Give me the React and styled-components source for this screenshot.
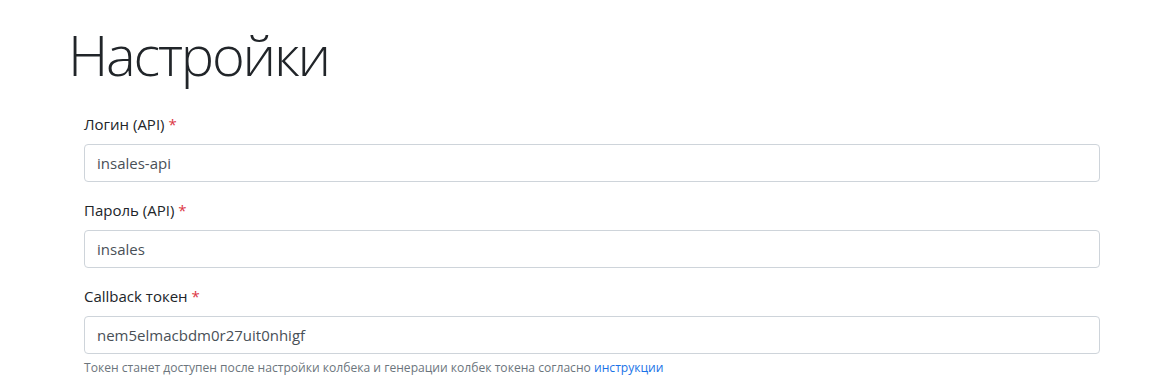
import React from "react";
import styled, { createGlobalStyle } from "styled-components";

const Global = createGlobalStyle`
  body {
    margin: 0;
    background: #fff;
    font-family: "Open Sans", "Noto Sans", sans-serif;
    color: #212529;
  }
`;

const Page = styled.div`
  padding: 21px 55px 0 68px;
`;

const Title = styled.h1`
  margin: 0 0 24px;
  font-size: 56px;
  font-weight: 300;
  line-height: 1.2;
  letter-spacing: -2.2px;
  color: #212529;
`;

const Form = styled.form`
  padding: 0 0 0 16px;
`;

const Group = styled.div`
  margin-bottom: 16px;
`;

const Label = styled.label`
  display: block;
  font-size: 15px;
  line-height: 24px;
  margin-bottom: 8px;
  color: #212529;
`;

const Req = styled.span`
  color: #dc3545;
`;

const Input = styled.input`
  display: block;
  box-sizing: border-box;
  width: 100%;
  height: 38px;
  padding: 6px 12px;
  font-family: inherit;
  font-size: 15px;
  color: #495057;
  background: #fff;
  border: 1px solid #ced4da;
  border-radius: 4px;
  outline: none;
`;

const Help = styled.small`
  display: block;
  margin-top: 5px;
  font-size: 12.1px;
  color: #6c757d;
`;

const Link = styled.a`
  color: #1a73e8;
  text-decoration: none;
`;

const fields = [
  { label: "Логин (API)", value: "insales-api" },
  { label: "Пароль (API)", value: "insales" },
  { label: "Callback токен", value: "nem5elmacbdm0r27uit0nhigf", help: true },
];

export default function App() {
  return (
    <Page>
      <Global />
      <Title>Настройки</Title>
      <Form>
        {fields.map((f) => (
          <Group key={f.label}>
            <Label>
              {f.label} <Req>*</Req>
            </Label>
            <Input defaultValue={f.value} />
            {f.help && (
              <Help>
                Токен станет доступен после настройки колбека и генерации колбек токена согласно{" "}
                <Link href="#">инструкции</Link>
              </Help>
            )}
          </Group>
        ))}
      </Form>
    </Page>
  );
}
